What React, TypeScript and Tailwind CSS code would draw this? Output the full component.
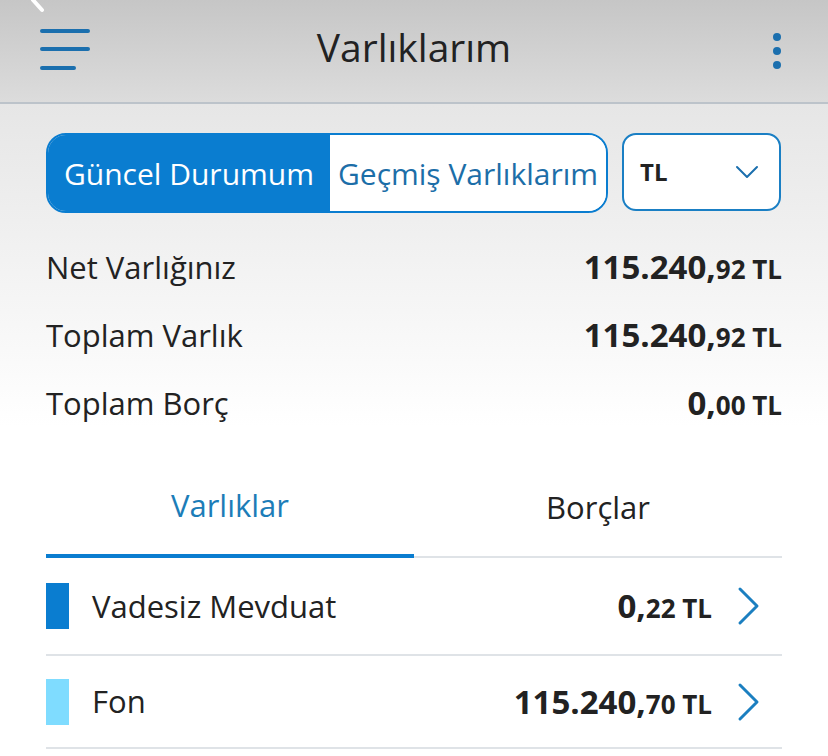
const FONT = { fontFamily: '"Open Sans", "Noto Sans", sans-serif' }

const SUMMARY = [
  { label: 'Net Varlığınız', whole: '115.240', cents: '92' },
  { label: 'Toplam Varlık', whole: '115.240', cents: '92' },
  { label: 'Toplam Borç', whole: '0', cents: '00' },
]

const ITEMS = [
  { label: 'Vadesiz Mevduat', whole: '0', cents: '22', color: 'bg-[#0a7dd0]' },
  { label: 'Fon', whole: '115.240', cents: '70', color: 'bg-[#7fdcff]' },
]

function Amount({ whole, cents }: { whole: string; cents: string }) {
  return (
    <span className="font-bold text-[#222]">
      <span className="text-[33px]">{whole},</span>
      <span className="text-[26px]">{cents} TL</span>
    </span>
  )
}

function Chevron() {
  return (
    <svg width="26" height="40" viewBox="0 0 26 40" className="ml-[24px] mr-[20px]">
      <path d="M4 3 L21 20 L4 37" fill="none" stroke="#1b7fc0" strokeWidth="3" strokeLinecap="round" strokeLinejoin="round" />
    </svg>
  )
}

export default function App() {
  return (
    <div className="w-[828px] h-[756px] overflow-hidden bg-white" style={FONT}>
      {/* Top bar */}
      <div className="relative h-[104px] bg-gradient-to-b from-[#c6c6c6] to-[#dcdcdc] border-b-2 border-[#bcc3ca] flex items-center px-10">
        <svg className="absolute left-0 top-0" width="50" height="14" viewBox="0 0 50 14">
          <path d="M33 0 L42 10" stroke="white" strokeWidth="4" strokeLinecap="round" />
        </svg>
        <div className="w-[60px]">
          <svg width="50" height="44" viewBox="0 0 50 44" className="mt-[-2px]">
            <path d="M2 3 H48 M2 21 H48 M2 40 H34" stroke="#1b6fae" strokeWidth="4" strokeLinecap="round" />
          </svg>
        </div>
        <h1 className="flex-1 text-center text-[39px] text-[#222] -mt-2">Varlıklarım</h1>
        <div className="w-[60px] flex justify-end">
          <svg width="10" height="38" viewBox="0 0 10 38" className="mr-[6px] -mt-[1px]">
            <circle cx="5" cy="5" r="4" fill="#1b6fae" />
            <circle cx="5" cy="19" r="4" fill="#1b6fae" />
            <circle cx="5" cy="33" r="4" fill="#1b6fae" />
          </svg>
        </div>
      </div>

      <div className="bg-gradient-to-b from-[#e6e6e6] via-white to-white px-[46px] pt-[29px]">
        {/* Segmented control + currency */}
        <div className="flex gap-[14px]">
          <div className="w-[562px] h-[80px] rounded-[20px] border-2 border-[#0a7dd0] flex overflow-hidden">
            <div className="w-[282px] bg-[#0a7dd0] text-white text-[30px] flex items-center justify-center">
              Güncel Durumum
            </div>
            <div className="flex-1 bg-white text-[#1c6ea8] text-[30px] flex items-center justify-center">
              Geçmiş Varlıklarım
            </div>
          </div>
          <div className="w-[159px] h-[78px] rounded-[14px] border-2 border-[#1a7fc4] bg-white flex items-center justify-between pl-4 pr-5">
            <span className="text-[24px] font-bold text-[#222]">TL</span>
            <svg width="24" height="14" viewBox="0 0 24 14">
              <path d="M2 2 L12 12 L22 2" fill="none" stroke="#1b6fae" strokeWidth="2" strokeLinecap="round" strokeLinejoin="round" />
            </svg>
          </div>
        </div>

        {/* Summary */}
        <div className="mt-[20px] flex flex-col">
          {SUMMARY.map(row => (
            <div key={row.label} className="h-[68px] flex items-center justify-between">
              <span className="text-[31px] text-[#222]">{row.label}</span>
              <Amount whole={row.whole} cents={row.cents} />
            </div>
          ))}
        </div>

        {/* Tabs */}
        <div className="mt-[34px] flex items-end">
          <div className="flex-1 h-[87px] flex items-start justify-center pt-[11px] border-b-4 border-[#0a7dd0]">
            <span className="text-[31px] text-[#1c7db8]">Varlıklar</span>
          </div>
          <div className="flex-1 h-[85px] flex items-start justify-center pt-[11px] border-b-2 border-[#dfe3e7]">
            <span className="text-[31px] text-[#222]">Borçlar</span>
          </div>
        </div>

        {/* Items */}
        {ITEMS.map((item, i) => (
          <div key={item.label} className={`${i === 0 ? 'h-[98px]' : 'h-[93px]'} flex items-center border-b-2 border-[#dfe3e7]`}>
            <div className={`w-[23px] h-[46px] ${item.color}`} />
            <span className="ml-[23px] text-[31px] text-[#222] flex-1">{item.label}</span>
            <Amount whole={item.whole} cents={item.cents} />
            <Chevron />
          </div>
        ))}
      </div>
    </div>
  )
}
